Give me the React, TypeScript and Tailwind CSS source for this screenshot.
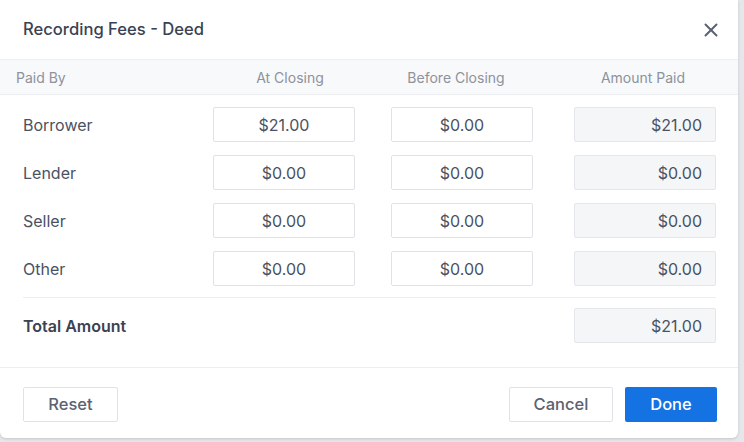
import { X } from 'lucide-react'

interface FeeRow {
  label: string
  atClosing: string
  beforeClosing: string
  amountPaid: string
}

const rows: FeeRow[] = [
  { label: 'Borrower', atClosing: '$21.00', beforeClosing: '$0.00', amountPaid: '$21.00' },
  { label: 'Lender', atClosing: '$0.00', beforeClosing: '$0.00', amountPaid: '$0.00' },
  { label: 'Seller', atClosing: '$0.00', beforeClosing: '$0.00', amountPaid: '$0.00' },
  { label: 'Other', atClosing: '$0.00', beforeClosing: '$0.00', amountPaid: '$0.00' },
]

export default function App() {
  return (
    <div
      className="w-[744px] h-[442px] bg-[#e6e7ea] overflow-hidden"
      style={{ fontFamily: 'Inter, "Noto Sans", sans-serif' }}
    >
      <div className="w-[738px] h-[438px] bg-white rounded-b-md shadow-[0_1px_3px_rgba(0,0,0,0.15)] flex flex-col">
        {/* header */}
        <div className="h-[59px] flex items-center justify-between pl-[23px] pr-[16px]">
          <h1 className="text-[16.6px] font-medium text-[#3a4253]">Recording Fees - Deed</h1>
          <X className="w-[22px] h-[22px] text-[#5b6271]" strokeWidth={2.2} />
        </div>

        {/* column headings */}
        <div className="h-[36px] flex items-center pl-[16px] bg-[#f8f9fb] border-y border-[#eceef1] text-[14px] text-[#8d929b]">
          <div className="w-[197px]">Paid By</div>
          <div className="w-[154px] text-center">At Closing</div>
          <div className="w-[154px] ml-[12px] text-center">Before Closing</div>
          <div className="w-[154px] ml-[33px] text-center">Amount Paid</div>
        </div>

        {/* rows */}
        <div className="px-[23px] pr-[22px] pt-[12px] flex flex-col gap-[13px]">
          {rows.map((row) => (
            <div key={row.label} className="flex items-center h-[35px]">
              <div className="flex-1 text-[16px] text-[#4a5262]">{row.label}</div>
              <div className="w-[142px] h-[35px] border border-[#dfe2e7] rounded-[2px] flex items-center justify-center text-[16px] text-[#4a5262]">
                {row.atClosing}
              </div>
              <div className="w-[142px] h-[35px] ml-[36px] border border-[#dfe2e7] rounded-[2px] flex items-center justify-center text-[16px] text-[#4a5262]">
                {row.beforeClosing}
              </div>
              <div className="w-[142px] h-[35px] ml-[41px] border border-[#e3e6ea] bg-[#f4f6f8] rounded-[2px] flex items-center justify-end pr-[13px] text-[16px] text-[#4a5262]">
                {row.amountPaid}
              </div>
            </div>
          ))}
        </div>

        {/* total */}
        <div className="mx-[23px] mr-[22px] mt-[11px] border-t border-[#eceef1] pt-[10px] pb-[24px] flex items-center">
          <div className="flex-1 text-[16px] font-semibold text-[#3a4253]">Total Amount</div>
          <div className="w-[142px] h-[35px] border border-[#e3e6ea] bg-[#f4f6f8] rounded-[2px] flex items-center justify-end pr-[13px] text-[16px] text-[#4a5262]">
            $21.00
          </div>
        </div>

        {/* footer */}
        <div className="border-t border-[#eceef1] flex items-center justify-between pl-[23px] pr-[21px] pt-[19px]">
          <button className="w-[95px] h-[35px] border border-[#dfe2e7] rounded-[2px] text-[16.5px] font-medium text-[#5b6271]">
            Reset
          </button>
          <div className="flex items-center gap-[12px]">
            <button className="w-[104px] h-[35px] border border-[#dfe2e7] rounded-[2px] text-[16.5px] font-medium text-[#5b6271]">
              Cancel
            </button>
            <button className="w-[92px] h-[35px] rounded-[2px] bg-[#1572e3] text-[16.5px] font-medium text-white">
              Done
            </button>
          </div>
        </div>
      </div>
    </div>
  )
}
